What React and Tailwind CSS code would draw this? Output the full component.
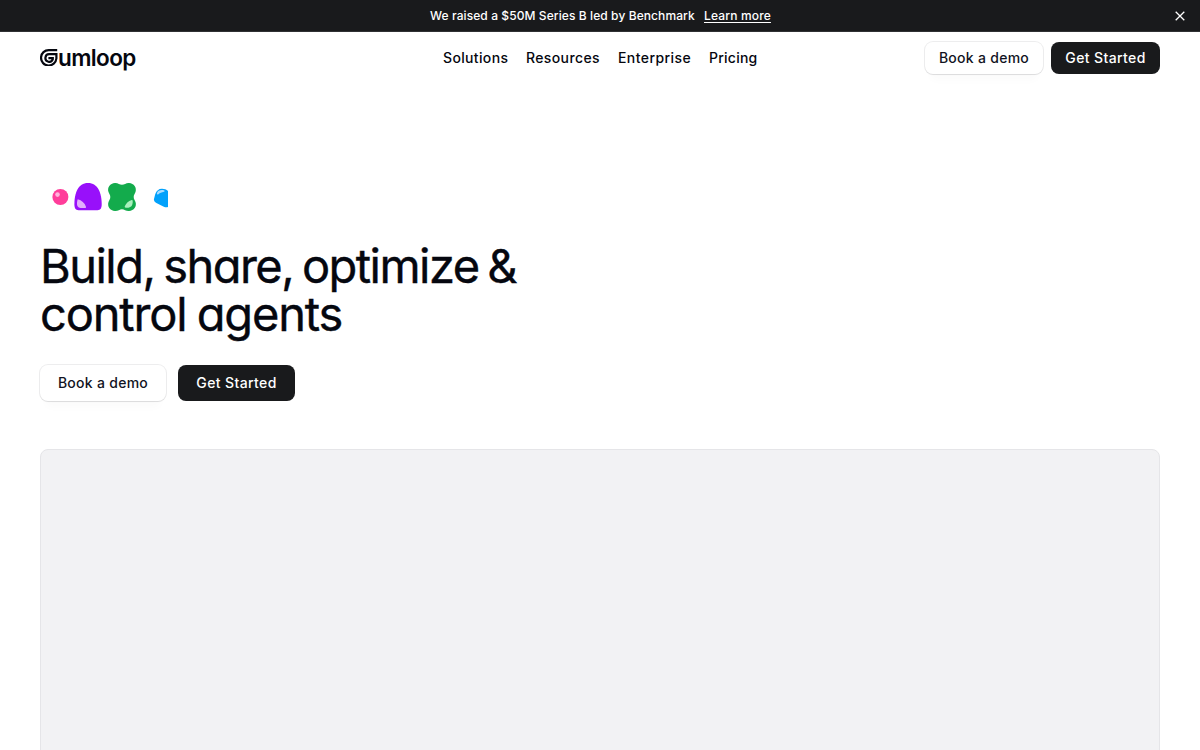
function GumloopLogo() {
  return (
    <a href="#" aria-label="Gumloop" className="flex h-6 w-24 items-start text-[#05070f]">
      <svg viewBox="0 0 18 20" className="h-5 w-[18px] shrink-0" fill="none" stroke="currentColor" strokeWidth="2.2">
        <path d="M17.200 4.100H8.900a7.700 7.700 0 1 0 7.500 8.400V8.200H9.300a3.800 3.800 0 1 0 3.500 5v-1H8.400" />
      </svg>
      <span className="text-[22.5px] leading-6 font-semibold tracking-[-0.6px]">umloop</span>
    </a>
  );
}

function LightButton({ className, children }) {
  return (
    <button
      className={`flex items-center justify-center rounded-lg bg-white text-sm font-medium whitespace-nowrap text-[#111322] shadow-[0_0_0_1px_rgba(20,20,40,0.08),0_1px_1px_rgba(0,0,0,0.06),0_12px_8px_-6px_rgba(0,0,0,0.02)] ${className}`}
    >
      {children}
    </button>
  );
}

function DarkButton({ className, children }) {
  return (
    <button
      className={`flex items-center justify-center rounded-lg bg-[#191a1c] text-sm font-medium whitespace-nowrap text-white ${className}`}
    >
      {children}
    </button>
  );
}

function Shapes() {
  return (
    <svg viewBox="0 0 128 32" className="block h-8 w-32" aria-hidden="true">
      <circle cx="20.4" cy="16" r="8" fill="#ff3d9a" />
      <circle cx="17.5" cy="13.6" r="2.3" fill="#ffb3dc" />
      <path d="M34.400 23.500C34.400 12 38 2 48 2s13.700 10 13.700 21.500c0 3.500-1.200 5.700-4.200 5.700h-19c-3 0-4.100-2.200-4.100-5.700Z" fill="#9810fa" />
      <path d="M37.700 18.300c4 1 7 4 8.200 7.200.300 1-.1 1.500-1 1.500h-4.200c-3.600 0-4.600-3.600-3-8.700Z" fill="#e1aefb" />
      <path d="M75 2c3-.2 4.600 1.800 7 1.800S86 1.800 89 2c5 .3 8 4.700 6.500 9-.7 2-1.800 2.800-1.800 5s1.100 3 1.800 5c1.500 4.300-1.500 8.700-6.500 9-3 .2-4.600-1.800-7-1.800S78 30.200 75 30c-5-.3-8-4.700-6.500-9 .7-2 1.800-2.800 1.800-5s-1.100-3-1.800-5C67 6.700 70 2.300 75 2Z" fill="#13ab4c" />
      <path d="M91.800 18.900c-3.600 1-6 3.800-7 6.400-.3.900.2 1.300 1 1.400 4.300.6 7.200-1.200 6.900-6.900-.1-.7-.3-1-.9-.9Z" fill="#a9f0bd" />
      <path d="M128 10c-1.500-1.500-3.600-2.300-6-2.300-3.500 0-5.500 2-6.700 5.300l-1.200 4.500c-.5 2 .3 3.500 2.300 4.500l7.400 3.700c1.500.7 2.800.8 4.200.400Z" fill="#02a1fb" />
      <path d="M116.900 12.500c.3-2.900 4.100-4 6.900-3.200 1 .3 1.100 1.200.2 1.500-2.400.5-4 1.100-5.600 2.400-.8.600-1.500.2-1.500-.7Z" fill="#a9dcff" />
    </svg>
  );
}

export default function App() {
  return (
    <div className="h-[750px] overflow-hidden bg-white font-['Inter',sans-serif] text-[#05070f]">
      <div className="flex h-8 items-center border-b border-[#303133] bg-[#191a1c] text-xs font-medium text-white">
        <div className="w-10" />
        <div className="flex flex-1 items-center justify-center gap-[10px] pl-px whitespace-nowrap">
          <span className="w-[264px] tracking-[0.09px]">We raised a $50M Series B led by Benchmark</span>
          <a href="#" className="w-[67px] tracking-[0.16px] underline underline-offset-2">Learn more</a>
        </div>
        <button aria-label="Close" className="flex w-10 justify-center">
          <svg viewBox="0 0 10 10" className="size-[10px]" fill="none" stroke="currentColor" strokeWidth="1.3">
            <path d="m.7.700 8.600 8.600M9.300.700.700 9.300" />
          </svg>
        </button>
      </div>

      <header className="flex h-[52px] items-center px-10">
        <div className="flex flex-1"><GumloopLogo /></div>
        <nav className="flex gap-[18px] text-sm font-medium whitespace-nowrap">
          <a href="#" className="w-[65px] tracking-[0.35px]">Solutions</a>
          <a href="#" className="w-[74px] tracking-[0.38px]">Resources</a>
          <a href="#" className="w-[73px] tracking-[0.42px]">Enterprise</a>
          <a href="#" className="w-12 tracking-[0.24px]">Pricing</a>
        </nav>
        <div className="flex flex-1 justify-end gap-2">
          <LightButton className="h-8 w-[118px] tracking-[0.28px]">Book a demo</LightButton>
          <DarkButton className="h-8 w-[109px] tracking-[0.38px]">Get Started</DarkButton>
        </div>
      </header>

      <main className="px-10 pt-[97px]">
        <Shapes />
        <h1 className="mt-[29px] text-[47px] leading-12 font-normal whitespace-nowrap [-webkit-text-stroke:0.4px_#05070f] [font-feature-settings:'cv11']">
          <span className="block [word-spacing:-3px] tracking-[-1.53px]">Build, share, optimize &amp;</span>
          <span className="block [word-spacing:-2px] tracking-[-1.15px]">control agents</span>
        </h1>
        <div className="mt-[27px] flex gap-3">
          <LightButton className="h-9 w-[126px] tracking-[0.28px]">Book a demo</LightButton>
          <DarkButton className="h-9 w-[117px] tracking-[0.38px]">Get Started</DarkButton>
        </div>
        <div className="mt-12 h-[640px] rounded-lg border border-[#e5e5e8] bg-[#f2f2f4]" />
      </main>
    </div>
  );
}
